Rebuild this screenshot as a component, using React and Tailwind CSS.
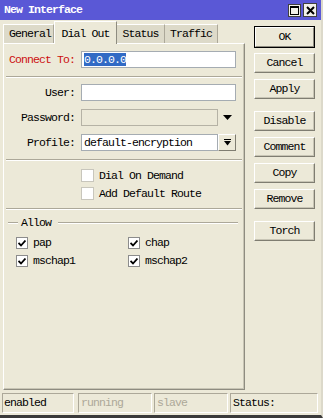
import React from "react";

function Btn({ children, def }) {
  if (def) {
    return (
      <div className="h-[22px] w-[61px] border border-black bg-[#ece9d8] flex">
        <div className="flex-1 flex items-center justify-center border border-t-white border-l-white border-r-[#8e8c80] border-b-[#8e8c80]">
          {children}
        </div>
      </div>
    );
  }
  return (
    <div className="h-[20px] w-[61px] bg-[#ece9d8] flex items-center justify-center border border-t-[#ffffff] border-l-[#ffffff] border-r-[#7f7d71] border-b-[#7f7d71] shadow-[inset_-1px_-1px_0_#c8c5b5]">
      {children}
    </div>
  );
}

function Check() {
  return (
    <div className="w-[12px] h-[12px] bg-white border border-[#8c8c8c] flex items-center justify-center">
      <svg width="8" height="7" viewBox="0 0 8 7">
        <path d="M0.5 3 L3 5.5 L7.5 0.5" fill="none" stroke="black" strokeWidth="1.8" />
      </svg>
    </div>
  );
}

function Sep() {
  return <div className="h-[2px] mx-[2px] border-t border-t-[#aca899] border-b border-b-white" />;
}

export default function App() {
  return (
    <div className="w-[323px] h-[418px] bg-[#ece9d8] flex flex-col font-['Liberation_Mono',monospace] text-[11.5px] tracking-[-0.9px] text-black overflow-hidden border-b-[3px] border-b-[#3a3a3a] border-r-2 border-r-[#dcd9ca]">
      {/* title bar */}
      <div className="h-[20px] shrink-0 bg-[#5a58d6] flex items-center pl-[4px] pr-[4px]">
        <span className="text-white font-bold leading-none">New Interface</span>
        <div className="ml-auto flex items-center gap-[2px]">
          <div className="w-[13px] h-[13px] bg-[#f2f1ea] border border-[#404040] flex items-center justify-center">
            <svg width="9" height="9" viewBox="0 0 9 9">
              <rect x="0.5" y="0.5" width="8" height="8" fill="none" stroke="black" />
              <line x1="0" y1="1.5" x2="9" y2="1.5" stroke="black" />
            </svg>
          </div>
          <div className="w-[14px] h-[14px] bg-[#f2f1ea] border border-[#404040] flex items-center justify-center">
            <svg width="9" height="9" viewBox="0 0 9 9">
              <path d="M1 1 L8 8 M8 1 L1 8" stroke="black" strokeWidth="2" />
            </svg>
          </div>
        </div>
      </div>

      {/* main */}
      <div className="h-[370px] shrink-0 flex">
        <div className="ml-[3px] w-[242px] flex flex-col">
          {/* tabs */}
          <div className="h-[23px] flex items-end">
            <div className="w-[51px] h-[19px] bg-[#dddac9] border-t border-l border-t-white border-l-white border-r border-r-[#aca899] flex items-center pl-[5px]">
              General
            </div>
            <div className="relative z-10 w-[63px] h-[23px] -mb-[1px] bg-[#ece9d8] border-t border-l border-t-white border-l-white border-r border-r-[#8e8c80] flex items-start justify-center pt-[3px]">
              Dial Out
            </div>
            <div className="w-[48px] h-[19px] bg-[#dddac9] border-t border-t-white border-r border-r-[#aca899] flex items-center justify-center">
              Status
            </div>
            <div className="w-[53px] h-[19px] bg-[#dddac9] border-t border-t-white border-r border-r-[#aca899] flex items-center justify-center">
              Traffic
            </div>
          </div>
          {/* panel */}
          <div className="flex-1 bg-[#ece9d8] border border-t-white border-l-white border-r-[#8e8c80] border-b-[#8e8c80] shadow-[inset_-1px_-1px_0_#c8c5b5] flex flex-col pt-[7px]">
            <div className="flex items-center h-[17px]">
              <div className="w-[71px] text-right text-[#cc1010]">Connect To:</div>
              <div className="ml-[6px] w-[155px] h-[17px] bg-white border border-[#a5acb2] flex items-center pl-[2px]">
                <span className="bg-[#316ac5] text-white h-[13px] leading-[13px]">0.0.0.0</span>
              </div>
            </div>
            <div className="mt-[8px]">
              <Sep />
            </div>
            <div className="mt-[6px] flex items-center h-[17px]">
              <div className="w-[71px] text-right">User:</div>
              <div className="ml-[6px] w-[155px] h-[17px] bg-white border border-[#a5acb2]" />
            </div>
            <div className="mt-[8px] flex items-center h-[17px]">
              <div className="w-[71px] text-right">Password:</div>
              <div className="ml-[6px] w-[137px] h-[17px] bg-[#ece9d8] border border-[#b5b2a5]" />
              <svg className="ml-[5px]" width="9" height="5" viewBox="0 0 9 5">
                <polygon points="0,0 9,0 4.5,5" fill="black" />
              </svg>
            </div>
            <div className="mt-[8px] flex items-center h-[17px]">
              <div className="w-[71px] text-right">Profile:</div>
              <div className="ml-[6px] w-[137px] h-[17px] bg-white border border-[#a5acb2] flex items-center pl-[2px]">
                default-encryption
              </div>
              <div className="w-[18px] h-[17px] bg-[#ece9d8] border border-t-white border-l-white border-r-[#7f7d71] border-b-[#7f7d71] flex items-center justify-center">
                <svg width="7" height="7" viewBox="0 0 7 7">
                  <rect x="0" y="0" width="7" height="1" fill="black" />
                  <polygon points="0,2 7,2 3.5,6.5" fill="black" />
                </svg>
              </div>
            </div>
            <div className="mt-[8px]">
              <Sep />
            </div>
            <div className="mt-[8px] flex items-center h-[13px]">
              <div className="ml-[77px] w-[13px] h-[13px] bg-white border border-[#c8c6bc]" />
              <span className="ml-[5px]">Dial On Demand</span>
            </div>
            <div className="mt-[5px] flex items-center h-[13px]">
              <div className="ml-[77px] w-[13px] h-[13px] bg-white border border-[#c8c6bc]" />
              <span className="ml-[5px]">Add Default Route</span>
            </div>
            <div className="mt-[8px]">
              <Sep />
            </div>
            <div className="mt-[6px] flex items-center h-[14px]">
              <div className="ml-[4px] w-[10px] h-[2px] border-t border-t-[#aca899] border-b border-b-white" />
              <span className="ml-[3px]">Allow</span>
              <div className="ml-[7px] mr-[6px] flex-1 h-[2px] border-t border-t-[#aca899] border-b border-b-white" />
            </div>
            <div className="mt-[7px] ml-[12px] grid grid-cols-[112px_1fr] gap-y-[6px]">
              <div className="flex items-center h-[12px]">
                <Check />
                <span className="ml-[5px]">pap</span>
              </div>
              <div className="flex items-center h-[12px]">
                <Check />
                <span className="ml-[5px]">chap</span>
              </div>
              <div className="flex items-center h-[12px]">
                <Check />
                <span className="ml-[5px]">mschap1</span>
              </div>
              <div className="flex items-center h-[12px]">
                <Check />
                <span className="ml-[5px]">mschap2</span>
              </div>
            </div>
          </div>
        </div>

        {/* buttons */}
        <div className="ml-[9px] w-[61px] pt-[6px] flex flex-col">
          <Btn def>OK</Btn>
          <div className="mt-[5px]"><Btn>Cancel</Btn></div>
          <div className="mt-[6px]"><Btn>Apply</Btn></div>
          <div className="mt-[12px]"><Btn>Disable</Btn></div>
          <div className="mt-[6px]"><Btn>Comment</Btn></div>
          <div className="mt-[6px]"><Btn>Copy</Btn></div>
          <div className="mt-[6px]"><Btn>Remove</Btn></div>
          <div className="mt-[12px]"><Btn>Torch</Btn></div>
        </div>
      </div>

      {/* status bar */}
      <div className="pt-[3px] pl-[2px] flex">
        <div className="w-[72px] h-[20px] border border-t-[#aca899] border-l-[#aca899] border-b-white border-r-white flex items-center pl-[1px]">
          enabled
        </div>
        <div className="ml-[4px] w-[74px] h-[20px] border border-t-[#aca899] border-l-[#aca899] border-b-white border-r-white flex items-center pl-[2px] text-[#aca899]">
          running
        </div>
        <div className="ml-[2px] w-[74px] h-[20px] border border-t-[#aca899] border-l-[#aca899] border-b-white border-r-white flex items-center pl-[2px] text-[#aca899]">
          slave
        </div>
        <div className="ml-[2px] w-[88px] h-[20px] border border-t-[#aca899] border-l-[#aca899] border-b-white border-r-white flex items-center pl-[2px]">
          Status:
        </div>
      </div>
    </div>
  );
}
